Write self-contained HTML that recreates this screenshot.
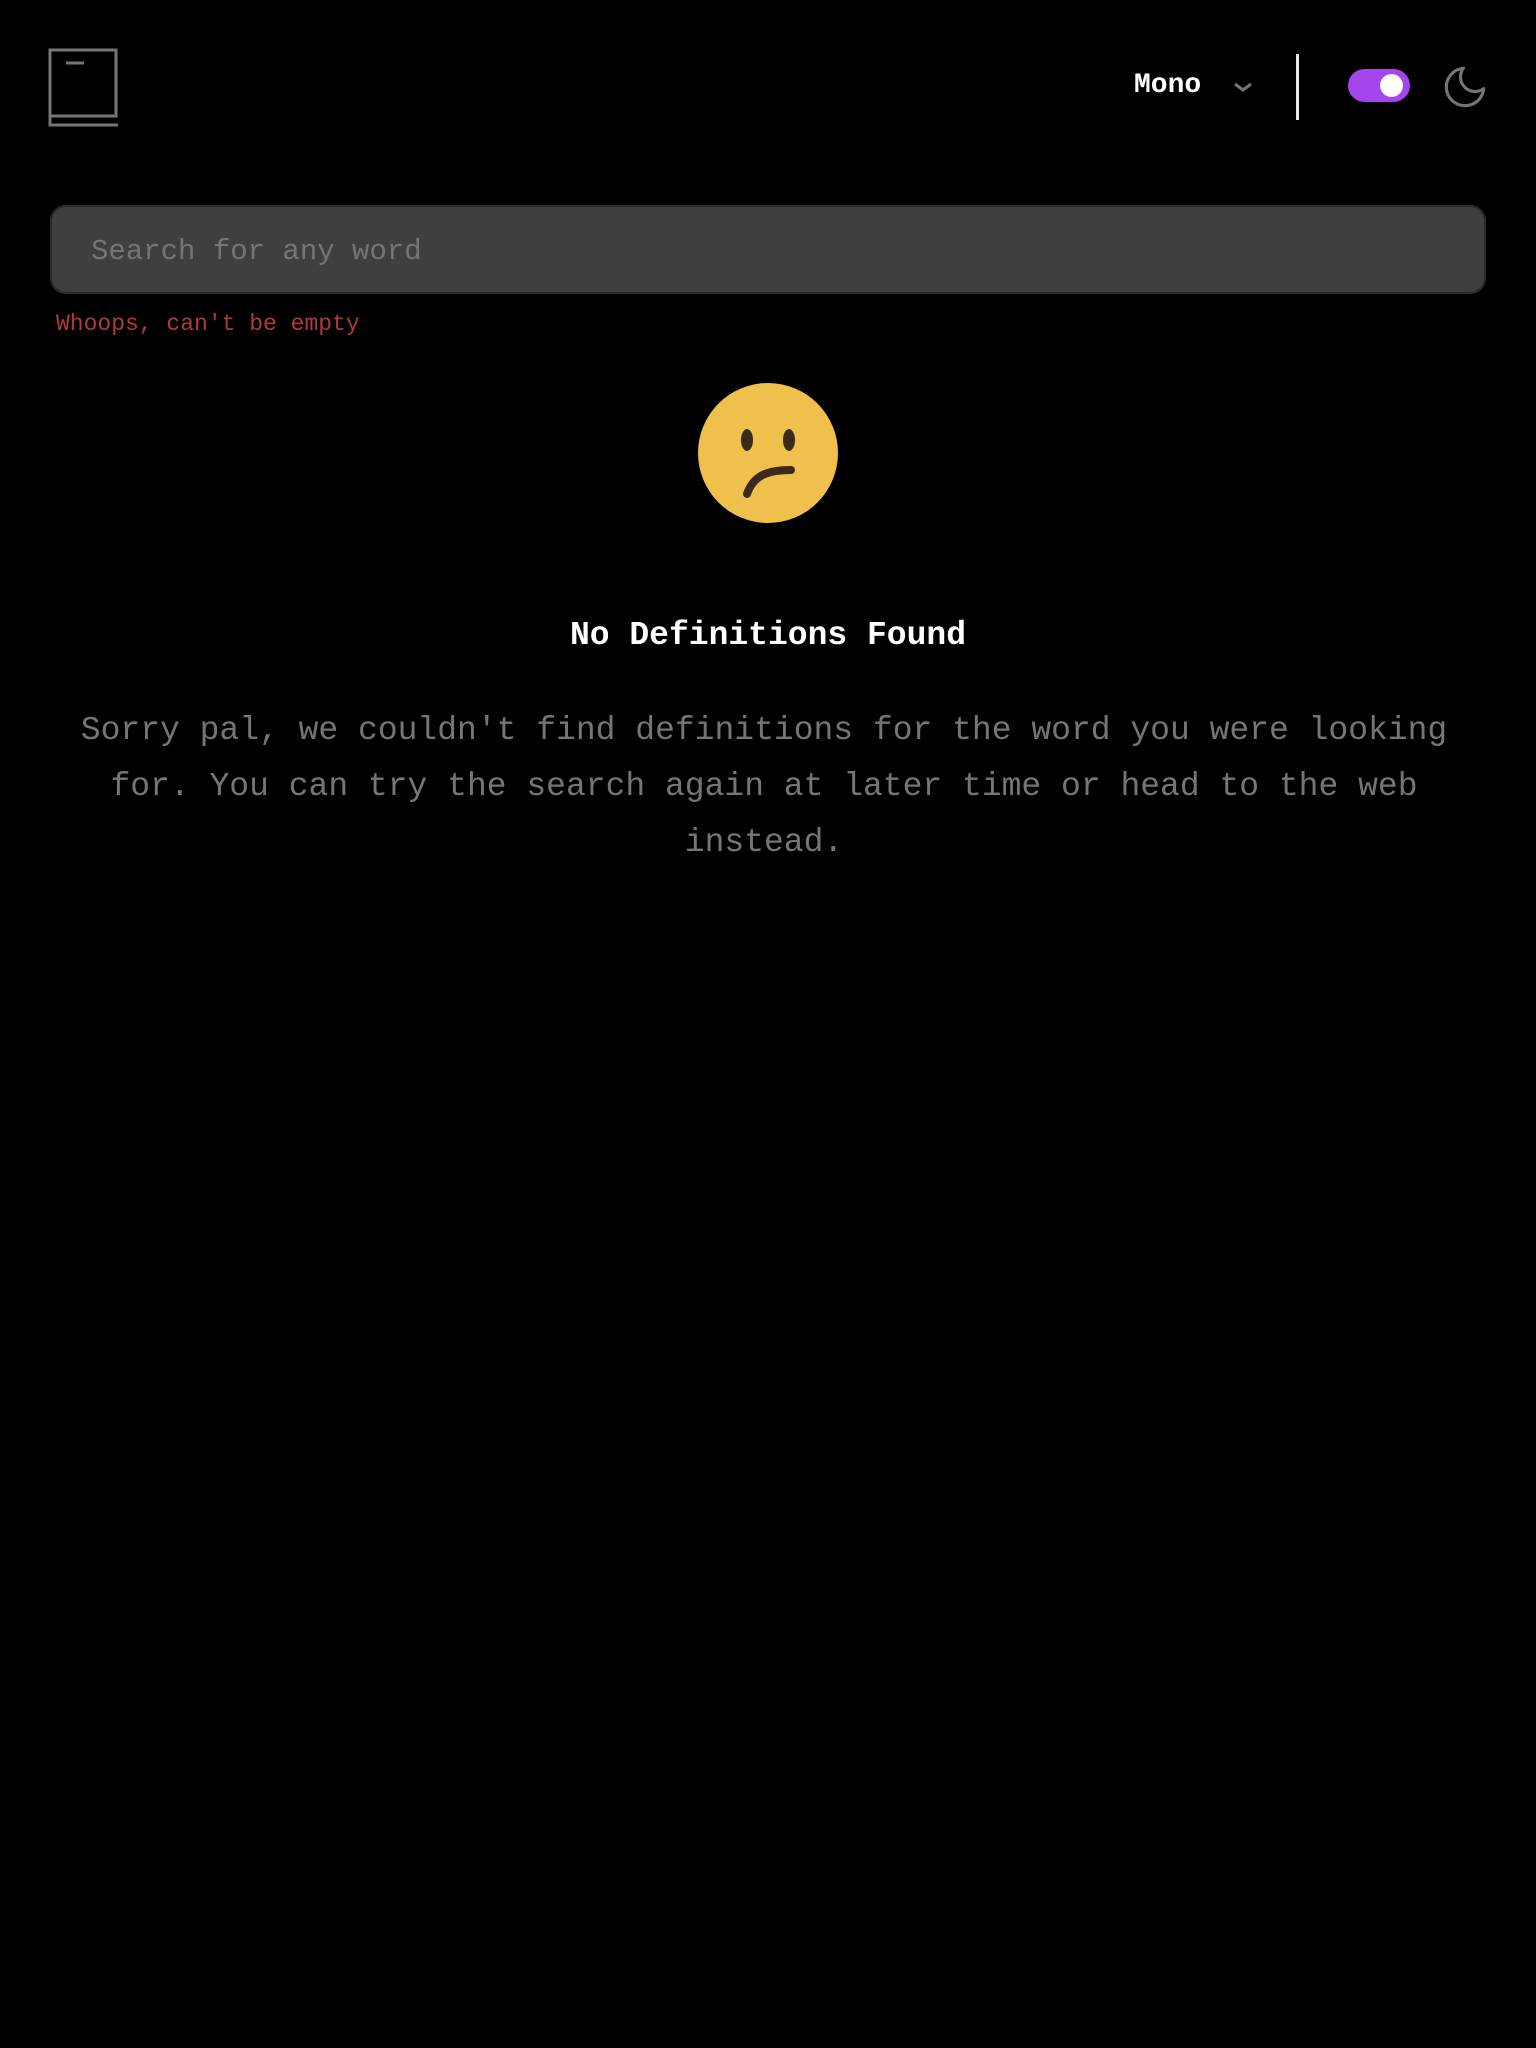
<!DOCTYPE html>
<html><head><meta charset="utf-8"><style>
html,body{margin:0;padding:0;background:#000;width:1536px;height:2048px;overflow:hidden;font-family:"Liberation Mono",monospace;}
.abs{position:absolute;}
</style></head><body>
<svg class="abs" style="left:46px;top:46px" width="78" height="82" viewBox="0 0 78 82" fill="none" stroke="#757575" stroke-width="3">
<path d="M4 4h66v66H4z M4 70v9h68"/>
<path d="M20 17h18"/>
</svg>
<div class="abs" style="left:1134px;top:68px;color:#fff;font-weight:bold;font-size:28px;line-height:36px;">Mono</div>
<svg class="abs" style="left:1232px;top:80px" width="22" height="14" viewBox="0 0 22 14"><path d="M3 4l8 6 8-6" stroke="#757575" stroke-width="3" fill="none"/></svg>
<div class="abs" style="left:1296px;top:54px;width:3px;height:66px;background:#e9e9e9"></div>
<div class="abs" style="left:1348px;top:69px;width:62px;height:33px;border-radius:17px;background:#a445ed"></div>
<div class="abs" style="left:1380px;top:74px;width:23px;height:23px;border-radius:50%;background:#fff"></div>
<svg class="abs" style="left:1440px;top:62px" width="50" height="50" viewBox="0 0 24 24" fill="none" stroke="#757575" stroke-width="1.5" stroke-linejoin="round" stroke-linecap="round"><path d="M21 12.79A9 9 0 1 1 11.21 3 7 7 0 0 0 21 12.79z"/></svg>
<div class="abs" style="left:50px;top:205px;width:1436px;height:89px;border-radius:16px;background:#3f3f3f;box-shadow:0 0 0 2px #2a2a2a inset"></div>
<div class="abs" style="left:91px;top:232px;color:#757575;font-size:29px;line-height:40px;">Search for any word</div>
<div class="abs" style="left:56px;top:309px;color:#ff5252;font-size:23px;line-height:30px;opacity:.7">Whoops, can't be empty</div>
<svg class="abs" style="left:697px;top:382px" width="142" height="142" viewBox="0 0 142 142">
<circle cx="71" cy="71" r="70" fill="#f0c04c"/>
<ellipse cx="50" cy="58" rx="6" ry="11" fill="#3b2a1a"/>
<ellipse cx="92" cy="58" rx="6" ry="11" fill="#3b2a1a"/>
<path d="M50 112 C56 95 68 88 94 88" stroke="#3b2a1a" stroke-width="8" fill="none" stroke-linecap="round"/>
</svg>
<div class="abs" style="left:0;top:614px;width:1536px;text-align:center;color:#fff;font-weight:bold;font-size:33px;line-height:44px;">No Definitions Found</div>
<div class="abs" style="left:66px;top:703px;width:1396px;text-align:center;color:#757575;font-size:33px;line-height:56px;">Sorry pal, we couldn't find definitions for the word you were looking for. You can try the search again at later time or head to the web instead.</div>
</body></html>
